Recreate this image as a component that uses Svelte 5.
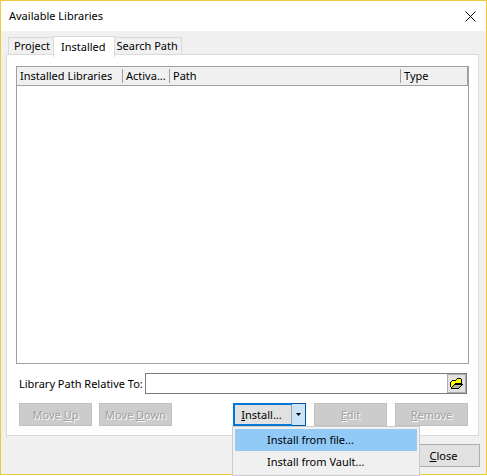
<script>
  let tab = $state('Installed');
  let path = $state('');
  const tabs = ['Project', 'Installed', 'Search Path'];
  const columns = ['Installed Libraries', 'Activa...', 'Path', 'Type'];
</script>

<main class="dialog">
  <header>
    <h1>Available Libraries</h1>
    <button class="dismiss" aria-label="Close window">
      <svg width="11" height="11" viewBox="0 0 11 11"><path d="M.5.5l10 10M10.5.5l-10 10" stroke="#000" fill="none" /></svg>
    </button>
  </header>

  <div class="tabs" role="tablist">
    {#each tabs as name}
      <button role="tab" class="tab" class:active={tab === name} aria-selected={tab === name} onclick={() => (tab = name)}>{name}</button>
    {/each}
  </div>

  <section class="panel" role="tabpanel" aria-label={tab}>
    <div class="list">
      <table>
        <colgroup><col class="name" /><col class="act" /><col /><col class="type" /></colgroup>
        <thead>
          <tr>{#each columns as c}<th scope="col"><span>{c}</span></th>{/each}</tr>
        </thead>
        <tbody></tbody>
      </table>
    </div>

    <div class="path">
      <label for="relative">Library Path Relative To:</label>
      <div class="field">
        <input id="relative" type="text" bind:value={path} />
        <button class="browse" aria-label="Browse">
          <svg width="13" height="11" viewBox="0 0 13 11" shape-rendering="crispEdges">
            <path d="M1 4h1V3h4V2h1V1h4v5H4v1H3v1H2v1H1z" fill="#ff0" />
            <path d="M4 7h7v1h-1v1H9v1H2V9h1V8h1z" fill="#b4b496" />
            <path d="M7 0h4v1H7zM6 1h1v1H6zM11 1h1v5h-1zM2 2h4v1H2zM1 3h1v1H1zM0 4h1v5H0zM5 5h6v1H5zM4 6h9v1H4zM3 7h1v1H3zM2 8h1v1H2zM1 9h1v1H1zM11 7h1v1h-1zM10 8h1v1h-1zM9 9h1v1H9zM1 10h8v1H1z" fill="#000" />
          </svg>
        </button>
      </div>
    </div>

    <div class="actions">
      <div class="order">
        <button class="btn" disabled>Move <u>U</u>p</button>
        <button class="btn" disabled>Move <u>D</u>own</button>
      </div>
      <div class="split">
        <button class="install"><u>I</u>nstall...</button>
        <button class="drop" aria-label="Install options" aria-haspopup="menu" aria-expanded="true">
          <svg width="5" height="3" viewBox="0 0 5 3"><path d="M0 0h5L2.5 3z" /></svg>
        </button>
        <div class="menu" role="menu">
          <button role="menuitem" class="current">Install from file...</button>
          <button role="menuitem">Install from Vault...</button>
        </div>
      </div>
      <button class="btn" disabled><u>E</u>dit</button>
      <button class="btn" disabled><u>R</u>emove</button>
    </div>
  </section>

  <footer>
    <button class="btn close"><u>C</u>lose</button>
  </footer>
</main>

<style>
  :global(body) {
    margin: 0;
    background: #fff;
  }
  :global(#app) {
    display: flex;
    flex-direction: column;
    min-height: 100vh;
  }
  .dialog, .dialog * {
    box-sizing: border-box;
  }
  .dialog {
    flex: 1;
    display: flex;
    flex-direction: column;
    margin-bottom: 1px;
    border: 1px solid #edcb3c;
    background: #f0f0f0;
    color: #000;
    font: 11px/16px "Noto Sans", "Open Sans", sans-serif;
  }
  button, input {
    margin: 0;
    padding: 0;
    border: 0;
    border-radius: 0;
    background: none;
    color: inherit;
    font: inherit;
    white-space: nowrap;
  }
  svg {
    display: block;
  }
  u {
    text-underline-offset: 1px;
  }
  header {
    display: flex;
    align-items: center;
    justify-content: space-between;
    height: 30px;
    padding: 0 10px 0 8px;
    background: #fff;
  }
  h1 {
    margin: 0;
    font-size: 11px;
    font-weight: 400;
  }
  .tabs {
    display: flex;
    align-items: flex-end;
    padding: 5px 7px 0;
  }
  .tab {
    height: 17px;
    border: 1px solid #d9d9d9;
    border-bottom: 0;
    line-height: 16px;
  }
  .tab:first-child {
    padding: 0 3px 0 5px;
    border-right: 0;
  }
  .tab:last-child {
    padding: 0 3px 0 2px;
    border-left: 0;
  }
  .tab.active {
    z-index: 1;
    height: 21px;
    margin-bottom: -3px;
    padding: 0 8px 0 7px;
    background: #fff;
    line-height: 18px;
  }
  .panel {
    flex: 1;
    display: flex;
    flex-direction: column;
    margin: 0 7px 0 5px;
    padding: 11px 9px 9px;
    border: 1px solid #d9d9d9;
    background: #fff;
  }
  .list {
    flex: 1;
    border: 1px solid #a0a0a0;
  }
  table {
    width: 100%;
    table-layout: fixed;
    border-collapse: collapse;
  }
  .name {
    width: 106px;
  }
  .act {
    width: 47px;
  }
  .type {
    width: 67px;
  }
  th {
    height: 18px;
    padding: 2px 0 1px;
    border-bottom: 1px solid #a0a0a0;
    background: #f0f0f0;
    font-weight: 400;
    text-align: left;
    white-space: nowrap;
  }
  th span {
    display: block;
    height: 14px;
    padding-left: 3px;
    border-right: 1px solid #a0a0a0;
    line-height: 14px;
  }
  th:last-child {
    box-shadow: inset -1px 0 #a0a0a0;
  }
  th:last-child span {
    border: 0;
  }
  .path {
    display: flex;
    align-items: center;
    gap: 2px;
    margin-top: 9px;
    padding: 0 2px 0 3px;
  }
  .field {
    flex: 1;
    display: flex;
    height: 21px;
    border: 1px solid #7a7a7a;
  }
  .field input {
    flex: 1;
    min-width: 0;
    padding: 0 3px;
    outline: 0;
  }
  .browse {
    display: grid;
    place-items: center;
    width: 19px;
    border: 1px solid #adadad;
    background: #e1e1e1;
  }
  .actions {
    display: flex;
    gap: 8px;
    margin-top: 9px;
    padding: 0 1px 0 3px;
  }
  .order {
    display: flex;
    gap: 7px;
    margin-right: auto;
  }
  .btn {
    width: 73px;
    height: 23px;
    border: 1px solid #adadad;
    background: #e1e1e1;
    text-align: center;
  }
  .btn:disabled {
    border-color: #bfbfbf;
    background: #ccc;
    color: #a0a0a0;
    text-shadow: 1px 1px #fff;
  }
  .split {
    position: relative;
    display: flex;
    width: 73px;
    height: 23px;
  }
  .install {
    flex: 1;
    padding-right: 4px;
    border: 2px solid #0078d7;
    border-right: 0;
    background: linear-gradient(#a0a0a0, #a0a0a0) right / 1px 100% no-repeat #e1e1e1;
  }
  .drop {
    display: grid;
    place-items: center;
    width: 14px;
    border: 1px solid #005499;
    border-left: 0;
    background: #cce4f7;
  }
  .menu {
    position: absolute;
    top: 100%;
    left: -1px;
    z-index: 2;
    display: flex;
    flex-direction: column;
    width: 188px;
    padding: 2px;
    border: 1px solid #ccc;
    background: #f0f0f0;
  }
  .menu button {
    height: 22px;
    padding-left: 32px;
    text-align: left;
  }
  .menu .current {
    background: #91c9f7;
  }
  footer {
    display: flex;
    justify-content: flex-end;
    padding: 8px 6px 7px;
  }
</style>
